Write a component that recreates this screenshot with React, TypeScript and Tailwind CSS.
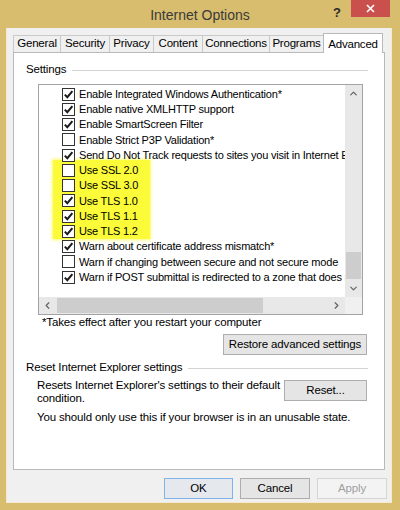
import { ChevronDown, ChevronLeft, ChevronRight, ChevronUp } from "lucide-react";

type Item = { label: string; checked: boolean };

const topItems: Item[] = [
  { label: "Enable Integrated Windows Authentication*", checked: true },
  { label: "Enable native XMLHTTP support", checked: true },
  { label: "Enable SmartScreen Filter", checked: true },
  { label: "Enable Strict P3P Validation*", checked: false },
  { label: "Send Do Not Track requests to sites you visit in Internet Explorer", checked: true },
];

const tlsItems: Item[] = [
  { label: "Use SSL 2.0", checked: false },
  { label: "Use SSL 3.0", checked: false },
  { label: "Use TLS 1.0", checked: true },
  { label: "Use TLS 1.1", checked: true },
  { label: "Use TLS 1.2", checked: true },
];

const bottomItems: Item[] = [
  { label: "Warn about certificate address mismatch*", checked: true },
  { label: "Warn if changing between secure and not secure mode", checked: false },
  { label: "Warn if POST submittal is redirected to a zone that does not permit posts", checked: true },
];

const tabs = [
  { label: "General", w: "w-[48px]" },
  { label: "Security", w: "w-[50px]" },
  { label: "Privacy", w: "w-[45px]" },
  { label: "Content", w: "w-[50px]" },
  { label: "Connections", w: "w-[68px]" },
  { label: "Programs", w: "w-[55px]" },
];

function Checkbox({ checked }: { checked: boolean }) {
  return (
    <span className="w-[13px] h-[13px] shrink-0 border border-[#333333] bg-white flex items-center justify-center">
      {checked && (
        <svg width="11" height="11" viewBox="0 0 11 11">
          <path d="M1.8 5.6 L4.3 8.2 L9.4 2.2" fill="none" stroke="#1a1a1a" strokeWidth="2" />
        </svg>
      )}
    </span>
  );
}

function Row({ item, indent }: { item: Item; indent: string }) {
  return (
    <div className={`h-[15.25px] flex items-center gap-[4px] whitespace-nowrap ${indent}`}>
      <Checkbox checked={item.checked} />
      <span>{item.label}</span>
    </div>
  );
}

function Button({ label, className = "" }: { label: string; className?: string }) {
  return (
    <div
      className={`h-[21px] flex items-center justify-center border text-[11.5px] tracking-[-0.15px] ${className}`}
    >
      {label}
    </div>
  );
}

export default function App() {
  return (
    <div
      className="w-[400px] h-[510px] bg-[#d7bd6d] flex flex-col text-black"
      style={{ fontFamily: '"Liberation Sans", Arial, sans-serif' }}
    >
      {/* Title bar */}

      <div className="h-[28px] shrink-0 grid grid-cols-[1fr_auto_1fr]">
        <div />
        <div className="text-[14px] text-[#3a3a3a] pt-[5px]">Internet Options</div>
        <div className="flex items-start justify-end pr-[10px]">
          <span className="text-[13px] font-bold text-[#2a2a2a] mt-[3px] mr-[10px]">?</span>
          <div className="w-[39px] h-[17px] bg-[#c9504c] flex items-center justify-center">
            <svg width="9" height="9" viewBox="0 0 9 9">
              <path d="M1 1 L8 8 M8 1 L1 8" stroke="#ffffff" strokeWidth="1.6" />
            </svg>
          </div>
        </div>
      </div>

      {/* Window body */}

      <div className="h-[475px] ml-[6px] mr-[8px] bg-[#f0f0f0] border-x border-b border-[#f3ead0] flex flex-col">

        {/* Tabs */}

        <div className="pt-[5px] pl-[6px] flex items-end h-[24px] text-[11.5px] tracking-[-0.2px]">
          {tabs.map((t, i) => (
            <div
              key={t.label}
              className={`${t.w} h-[17px] border border-b-0 border-[#c9c9c9] bg-[#f0f0f0] flex items-center justify-center ${i > 0 ? "-ml-px" : ""}`}
            >
              {t.label}
            </div>
          ))}
          <div className="w-[60px] h-[20px] -ml-px -mb-px relative z-10 border border-b-0 border-[#b9b9b9] bg-white flex items-start justify-center pt-[2px]">
            Advanced
          </div>
        </div>

        {/* Tab panel */}

        <div className="ml-[6px] w-[372px] h-[418px] border border-[#b9b9b9] bg-white flex flex-col pt-[10px] text-[11.5px] tracking-[-0.15px]">

          <div className="h-[14px] flex items-center pl-[12px] pr-[16px]">
            <span>Settings</span>
            <div className="flex-1 h-px bg-[#d3d3d3] ml-[6px]" />
          </div>

          {/* Settings list */}

          <div className="mt-[7px] ml-[24px] w-[325px] h-[231px] border border-[#a3a3a3] flex flex-col">
            <div className="flex h-[212px]">
              <div className="w-[306px] overflow-hidden pt-[1.5px] text-[11px] tracking-[-0.2px]">
                {topItems.map((it) => (
                  <Row key={it.label} item={it} indent="pl-[23px]" />
                ))}
                <div className="ml-[14px] w-[97px] -mt-[3px] pt-[3px] bg-[#fbfb3a] shadow-[0_0_3px_1px_#fbfb6a]">
                  {tlsItems.map((it) => (
                    <Row key={it.label} item={it} indent="pl-[9px]" />
                  ))}
                </div>
                {bottomItems.map((it) => (
                  <Row key={it.label} item={it} indent="pl-[23px]" />
                ))}
              </div>

              {/* Vertical scrollbar */}

              <div className="w-[17px] bg-[#e8e8e8] flex flex-col">
                <div className="h-[17px] flex items-center justify-center text-[#606060]">
                  <ChevronUp size={11} strokeWidth={2.5} />
                </div>
                <div className="flex-1" />
                <div className="h-[27px] mx-[1px] bg-[#cdcdcd]" />
                <div className="h-[1px]" />
                <div className="h-[17px] flex items-center justify-center text-[#606060]">
                  <ChevronDown size={11} strokeWidth={2.5} />
                </div>
              </div>
            </div>

            {/* Horizontal scrollbar */}

            <div className="flex h-[17px]">
              <div className="w-[306px] bg-[#e8e8e8] flex items-stretch">
                <div className="w-[17px] flex items-center justify-center text-[#606060]">
                  <ChevronLeft size={11} strokeWidth={2.5} />
                </div>
                <div className="w-[206px] my-[1px] ml-[1px] bg-[#cdcdcd]" />
                <div className="flex-1" />
                <div className="w-[17px] flex items-center justify-center text-[#606060]">
                  <ChevronRight size={11} strokeWidth={2.5} />
                </div>
              </div>
              <div className="w-[17px] bg-[#f0f0f0]" />
            </div>
          </div>

          <div className="mt-[1px] h-[14px] flex items-center pl-[28px]">
            *Takes effect after you restart your computer
          </div>

          <div className="mt-[4px] flex justify-end pr-[17px]">
            <Button label="Restore advanced settings" className="w-[144px] bg-[#e5e5e5] border-[#adadad]" />
          </div>

          <div className="mt-[6px] h-[14px] flex items-center pl-[12px] pr-[16px]">
            <span>Reset Internet Explorer settings</span>
            <div className="flex-1 h-px bg-[#d3d3d3] ml-[6px]" />
          </div>

          <div className="mt-[4px] flex items-start pl-[23px] pr-[17px]">
            <div className="flex-1 leading-[13px]">
              Resets Internet Explorer's settings to their default
              <br />
              condition.
            </div>
            <Button label="Reset..." className="mt-px w-[83px] bg-[#e5e5e5] border-[#adadad]" />
          </div>

          <div className="mt-[6px] h-[14px] flex items-center pl-[23px]">
            You should only use this if your browser is in an unusable state.
          </div>
        </div>

        {/* Dialog buttons */}

        <div className="mt-[8px] flex justify-end gap-[7px] pr-[4px]">
          <Button label="OK" className="w-[69px] bg-[#e5e9ee] border-[#7eb4ea]" />
          <Button label="Cancel" className="w-[70px] bg-[#e5e5e5] border-[#adadad]" />
          <Button label="Apply" className="w-[70px] bg-[#f3f3f3] border-[#d5d5d5] text-[#a0a0a0]" />
        </div>
      </div>
    </div>
  );
}
